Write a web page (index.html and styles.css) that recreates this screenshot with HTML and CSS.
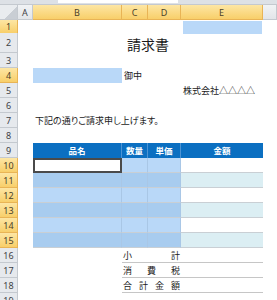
FILE: index.html
```html
<!DOCTYPE html>
<html lang="ja">
  <head>
    <meta charset="UTF-8" />
    <title>請求書</title>
    <link rel="stylesheet" href="styles.css">
  </head>
  <body>
    <div class="topbar"><div class="namebox"></div></div>
    <div class="sheet">
      <div class="row hdr">
        <div class="corner"></div>
        <div class="ch">A</div>
        <div class="ch sel">B</div>
        <div class="ch sel">C</div>
        <div class="ch sel">D</div>
        <div class="ch sel">E</div>
        <div class="ch"></div>
      </div>

      <div class="row r1">
        <div class="rh sel">1</div>
        <div class="cell col-e picked"></div>
      </div>
      <div class="row r2">
        <div class="rh">2</div>
        <div class="cell span-be title">請求書</div>
      </div>
      <div class="row">
        <div class="rh">3</div>
      </div>
      <div class="row">
        <div class="rh sel">4</div>
        <div class="cell col-b picked"></div>
        <div class="cell col-c text">御中</div>
      </div>
      <div class="row">
        <div class="rh">5</div>
        <div class="cell col-e text">株式会社△△△△</div>
      </div>
      <div class="row">
        <div class="rh">6</div>
      </div>
      <div class="row">
        <div class="rh">7</div>
        <div class="cell col-b text wide">下記の通りご請求申し上げます。</div>
      </div>
      <div class="row">
        <div class="rh">8</div>
      </div>

      <div class="row">
        <div class="rh">9</div>
        <div class="cell col-b th">品名</div>
        <div class="cell col-c th">数量</div>
        <div class="cell col-d th">単価</div>
        <div class="cell col-e th last">金額</div>
      </div>
      <div class="row">
        <div class="rh sel">10</div>
        <div class="cell col-b td active"></div>
        <div class="cell col-c td picked"></div>
        <div class="cell col-d td picked"></div>
        <div class="cell col-e td"></div>
      </div>
      <div class="row band">
        <div class="rh sel">11</div>
        <div class="cell col-b td picked"></div>
        <div class="cell col-c td picked"></div>
        <div class="cell col-d td picked"></div>
        <div class="cell col-e td"></div>
      </div>
      <div class="row">
        <div class="rh sel">12</div>
        <div class="cell col-b td picked"></div>
        <div class="cell col-c td picked"></div>
        <div class="cell col-d td picked"></div>
        <div class="cell col-e td"></div>
      </div>
      <div class="row band">
        <div class="rh sel">13</div>
        <div class="cell col-b td picked"></div>
        <div class="cell col-c td picked"></div>
        <div class="cell col-d td picked"></div>
        <div class="cell col-e td"></div>
      </div>
      <div class="row">
        <div class="rh sel">14</div>
        <div class="cell col-b td picked"></div>
        <div class="cell col-c td picked"></div>
        <div class="cell col-d td picked"></div>
        <div class="cell col-e td"></div>
      </div>
      <div class="row band">
        <div class="rh sel">15</div>
        <div class="cell col-b td picked"></div>
        <div class="cell col-c td picked"></div>
        <div class="cell col-d td picked"></div>
        <div class="cell col-e td"></div>
      </div>

      <div class="row">
        <div class="rh">16</div>
        <div class="cell span-cd sum"><span>小</span><span>計</span></div>
        <div class="cell col-e sum"></div>
      </div>
      <div class="row">
        <div class="rh">17</div>
        <div class="cell span-cd sum"><span>消</span><span>費</span><span>税</span></div>
        <div class="cell col-e sum"></div>
      </div>
      <div class="row">
        <div class="rh">18</div>
        <div class="cell span-cd sum"><span>合</span><span>計</span><span>金</span><span>額</span></div>
        <div class="cell col-e sum"></div>
      </div>
      <div class="row">
        <div class="rh">19</div>
      </div>
    </div>
  </body>
</html>
```

FILE: styles.css
```css
* {
  margin: 0;
  padding: 0;
  box-sizing: border-box;
}

body {
  width: 277px;
  height: 300px;
  overflow: hidden;
  background-color: #ffffff;
  font-family: "Noto Sans CJK JP", "Noto Sans", sans-serif;
  color: #1a1a1a;
}

.topbar {
  height: 5px;
  background-color: #dde1e6;
  border-bottom: 1px solid #c4c9cf;
}

.namebox {
  width: 120px;
  height: 3px;
  margin-left: 58px;
  background-color: #ffffff;
}

.row {
  display: grid;
  grid-template-columns: 18px 15px 89px 26px 33px 82px 1fr;
  height: 15px;
}

.hdr {
  height: 15px;
}

.r1 {
  height: 13px;
}

.r2 {
  height: 20px;
}

/* column and row headings */
.corner {
  background: linear-gradient(135deg, #e9ecef 60%, #c9ced4 60%);
  border-right: 1px solid #c4c9cf;
  border-bottom: 1px solid #c4c9cf;
}

.ch,
.rh {
  display: flex;
  align-items: center;
  justify-content: center;
  font-family: "Noto Sans", sans-serif;
  font-size: 9px;
  color: #3f4246;
  background: linear-gradient(#f1f3f5, #e2e5e9);
  border-right: 1px solid #c4c9cf;
  border-bottom: 1px solid #c4c9cf;
}

.rh {
  grid-column: 1;
  background: #e6e9ed;
}

.ch.sel,
.rh.sel {
  background: linear-gradient(#fde6a4, #f8cf6a);
  border-right-color: #e9b455;
  border-bottom-color: #e9b455;
  color: #4a3f2a;
}

/* cells */
.cell {
  font-size: 9px;
  line-height: 1;
  display: flex;
  align-items: center;
  white-space: nowrap;
}

.col-b { grid-column: 3; }
.col-c { grid-column: 4; }
.col-d { grid-column: 5; }
.col-e { grid-column: 6; }
.span-be { grid-column: 3 / 7; }
.span-cd { grid-column: 4 / 6; }

.picked {
  background-color: #b9d8f8;
}

.r1 .picked {
  margin: 1px 1px 0 2px;
}

.text {
  padding-left: 2px;
}

.wide {
  overflow: visible;
  font-feature-settings: "palt";
}

.title {
  justify-content: center;
  font-size: 14px;
  padding-top: 1px;
}

/* invoice table */
.th {
  justify-content: center;
  background-color: #0b6fc1;
  color: #ffffff;
  font-size: 8.5px;
  font-weight: bold;
  border-right: 1px solid #4c93d4;
}

.th.last {
  border-right: none;
}

.td {
  border-bottom: 1px solid #c9cfd4;
  border-right: 1px solid #a9c7e6;
}

.td.col-e {
  border-right: none;
}

.band .td.col-e {
  background-color: #dbeef3;
}

.band .picked {
  background-color: #a8ccef;
}

.active {
  background-color: #ffffff;
  border: 2px solid #4a4a4a;
}

/* totals */
.sum {
  border-bottom: 1px solid #c6c6c6;
}

.span-cd.sum {
  justify-content: space-between;
  padding: 0 1px 0 1px;
}
```
